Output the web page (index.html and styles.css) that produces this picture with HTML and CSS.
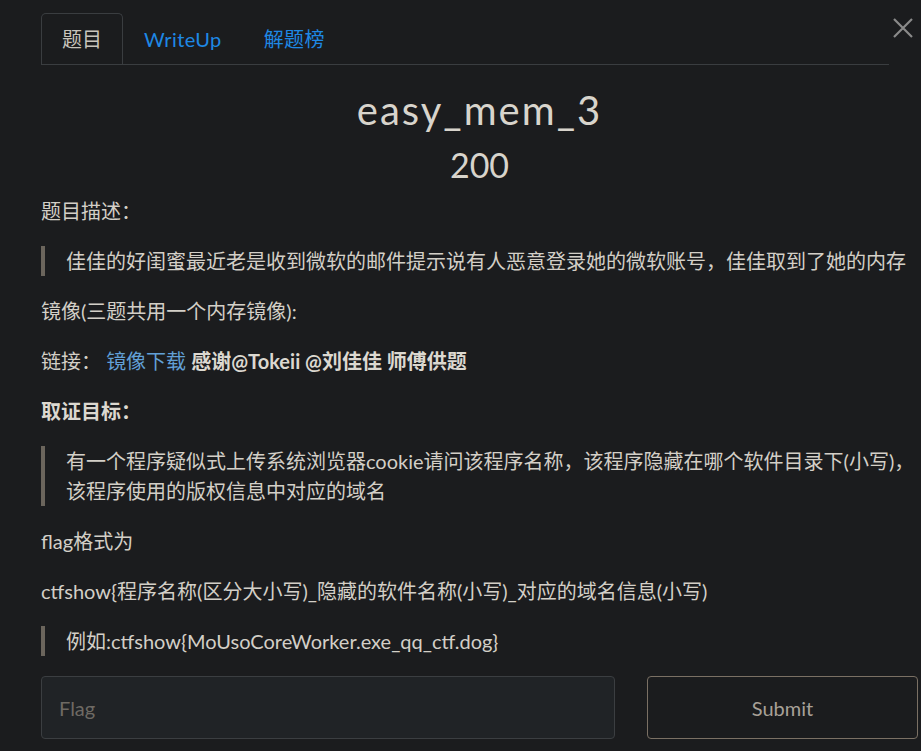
FILE: index.html
```html
<!DOCTYPE html>
<html lang="zh-CN">
<head>
  <meta charset="UTF-8" />
  <meta name="viewport" content="width=device-width, initial-scale=1.0"/>
  <title>easy_mem_3</title>
  <link rel="stylesheet" href="styles.css">
</head>
<body>
  <div class="modal">
    <button class="close" aria-label="Close">
      <svg width="20" height="20" viewBox="0 0 20 20"><path d="M1 1L19 19M19 1L1 19" stroke="#8a8a8a" stroke-width="2.2" fill="none"/></svg>
    </button>
    <nav class="tabs">
      <a class="tab active" href="#">题目</a>
      <a class="tab" href="#">WriteUp</a>
      <a class="tab" href="#">解题榜</a>
    </nav>
    <div class="challenge">
      <h1 class="name">easy_mem_3</h1>
      <h2 class="value">200</h2>
      <div class="desc">
        <p>题目描述：</p>
        <blockquote><p>佳佳的好闺蜜最近老是收到微软的邮件提示说有人恶意登录她的微软账号，佳佳取到了她的内存</p></blockquote>
        <p>镜像(三题共用一个内存镜像):</p>
        <p>链接： <a href="#">镜像下载</a> <strong>感谢@Tokeii @刘佳佳 师傅供题</strong></p>
        <p><strong>取证目标：</strong></p>
        <blockquote><p>有一个程序疑似式上传系统浏览器cookie请问该程序名称，该程序隐藏在哪个软件目录下(小写)，该程序使用的版权信息中对应的域名</p></blockquote>
        <p>flag格式为</p>
        <p>ctfshow{程序名称(区分大小写)_隐藏的软件名称(小写)_对应的域名信息(小写)</p>
        <blockquote><p>例如:ctfshow{MoUsoCoreWorker.exe_qq_ctf.dog}</p></blockquote>
      </div>
      <form class="submit-row" onsubmit="return false;">
        <input type="text" class="flag-input" placeholder="Flag" />
        <button type="submit" class="submit-btn">Submit</button>
      </form>
    </div>
  </div>
</body>
</html>
```

FILE: styles.css
```css
body { margin: 0; background: #1b1c1e; color: #d3cfc7; font-family: Lato, "Noto Sans CJK SC", sans-serif; font-size: 20px; line-height: 30px; }
.modal { position: relative; padding: 13px 3px 0 41px; }
.close { position: absolute; top: 18px; right: 8px; padding: 0; border: none; background: none; cursor: pointer; line-height: 0; }
.tabs { display: flex; margin-right: 29px; border-bottom: 1px solid #3a3d40; }
.tab { padding: 10px 20px; font-size: 20px; line-height: 30px; color: #1e88e5; text-decoration: none; border: 1px solid transparent; border-bottom: none; border-radius: 5px 5px 0 0; }
.tab + .tab { letter-spacing: 0.4px; }
.tab.active { color: #c8c4bc; border-color: #3a3d40; }
.name { margin: 21px 0 0; text-align: center; font-size: 40px; line-height: 48px; font-weight: 400; letter-spacing: 2px; color: #d8d4cc; }
.value { margin: 11px 0 11px; text-align: center; font-size: 34px; line-height: 40px; font-weight: 400; color: #d8d4cc; }
.desc p { margin: 0 0 20px; }
.desc a { color: #62a0d6; text-decoration: none; }
.desc strong { font-weight: 700; color: #dcd8d0; }
blockquote { margin: 0 0 20px; padding-left: 21px; border-left: 4px solid #6b655c; }
blockquote p { margin: 0 !important; }
.submit-row { display: grid; grid-template-columns: 574px 271px; column-gap: 32px; margin-top: 19px; }
.flag-input { height: 63px; box-sizing: border-box; padding: 0 17px; background: #202326; border: 1px solid #3b3e41; border-radius: 4px; color: #d3cfc7; font-family: Lato, sans-serif; font-size: 20px; }
.flag-input::placeholder { color: #6e6a64; }
.submit-btn { height: 63px; background: #1b1c1e; border: 1px solid #7a7064; border-radius: 4px; color: #a8a198; font-family: Lato, sans-serif; font-size: 20px; cursor: pointer; }
```
